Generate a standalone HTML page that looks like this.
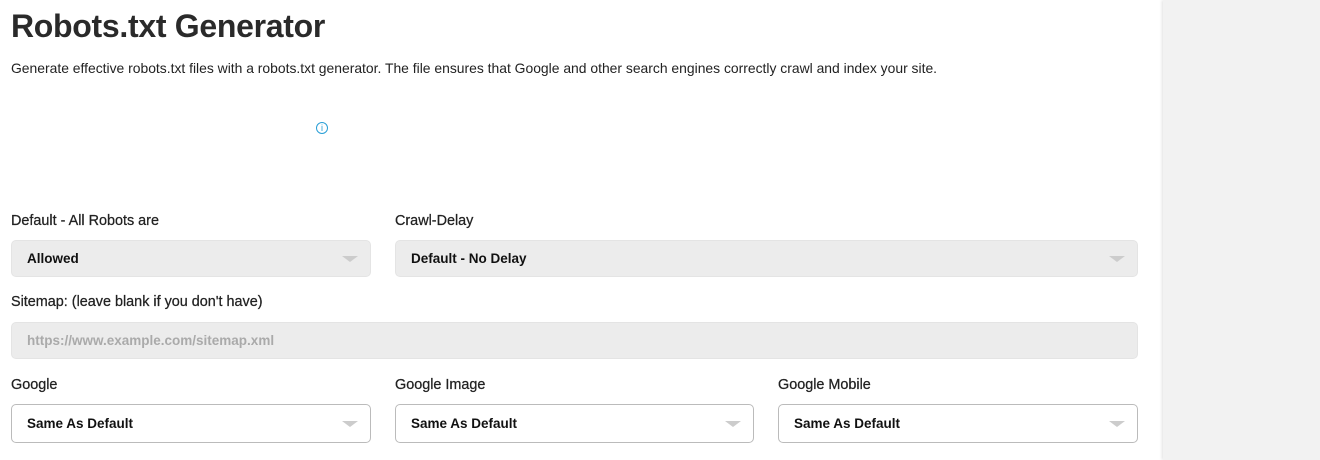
<!DOCTYPE html>
<html><head><style>
body{margin:0;width:1320px;height:460px;overflow:hidden;background:#fff;font-family:"Liberation Sans",sans-serif;color:#222;position:relative}
.side{position:absolute;left:1163px;top:0;width:157px;height:460px;background:#f2f2f2;box-shadow:-1px 0 3px rgba(0,0,0,.12)}
h1{position:absolute;left:11px;top:8px;margin:0;font-size:32px;font-weight:bold;color:#2a2a2a;letter-spacing:-0.3px}
.desc{position:absolute;left:11px;top:60px;font-size:13.9px;color:#222}
.info{position:absolute;left:316px;top:122px;width:10px;height:10px;border:1px solid #2a9fd6;border-radius:50%;color:#2a9fd6;font-size:9px;line-height:10px;text-align:center}
.lbl{position:absolute;font-size:14.4px;color:#222;-webkit-text-stroke:0.25px #222}
.box{position:absolute;box-sizing:border-box;border-radius:5px;font-size:13.5px;font-weight:bold;color:#111;padding-left:15px;display:flex;align-items:center}
.g{background:#ececec;border:1px solid #e4e4e4}
.w{background:#fff;border:1px solid #bbb}
.box:after{content:"";position:absolute;right:12px;top:50%;margin-top:-3px;border-left:8px solid transparent;border-right:8px solid transparent;border-top:6px solid #ccc}
.ph{color:#aaa}.ph:after{display:none}
</style></head><body>
<div class="side"></div>
<h1>Robots.txt Generator</h1>
<div class="desc">Generate effective robots.txt files with a robots.txt generator. The file ensures that Google and other search engines correctly crawl and index your site.</div>
<div class="info">i</div>
<div class="lbl" style="left:11px;top:213px">Default - All Robots are</div>
<div class="lbl" style="left:395px;top:213px">Crawl-Delay</div>
<div class="box g" style="left:11px;top:240px;width:360px;height:37px">Allowed</div>
<div class="box g" style="left:395px;top:240px;width:743px;height:37px">Default - No Delay</div>
<div class="lbl" style="left:11px;top:294px">Sitemap: (leave blank if you don't have)</div>
<div class="box g ph" style="left:11px;top:322px;width:1127px;height:37px">https://www.example.com/sitemap.xml</div>
<div class="lbl" style="left:11px;top:377px">Google</div>
<div class="lbl" style="left:395px;top:377px">Google Image</div>
<div class="lbl" style="left:778px;top:377px">Google Mobile</div>
<div class="box w" style="left:11px;top:404px;width:360px;height:39px">Same As Default</div>
<div class="box w" style="left:395px;top:404px;width:359px;height:39px">Same As Default</div>
<div class="box w" style="left:778px;top:404px;width:360px;height:39px">Same As Default</div>
</body></html>
